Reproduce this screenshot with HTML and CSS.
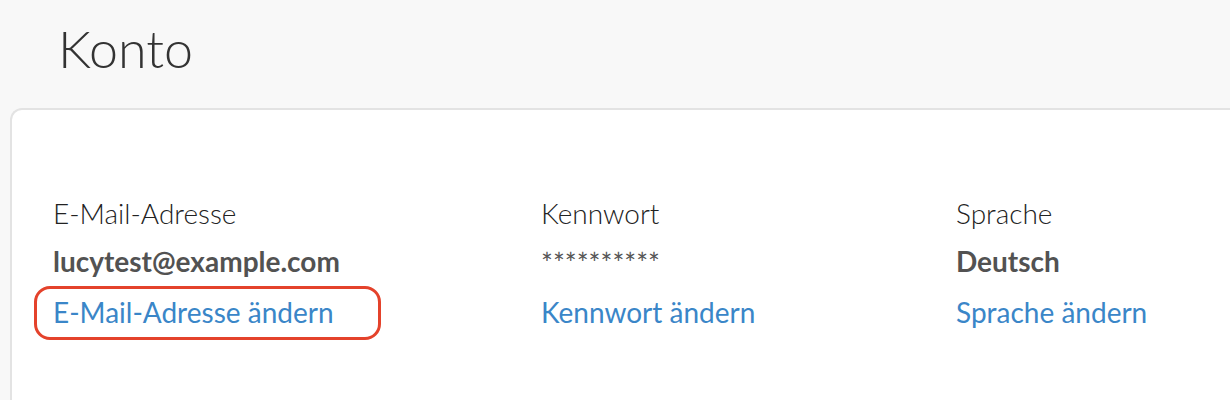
FILE: index.html
```html
<!DOCTYPE html>
<html lang="de">
<head>
<meta charset="utf-8">
<title>Konto</title>
<link rel="stylesheet" href="styles.css">
</head>
<body>
<header class="page-header">
  <h1 class="page-title">Konto</h1>
</header>
<section class="card">
  <div class="settings">
    <div class="setting">
      <div class="setting-label">E-Mail-Adresse</div>
      <div class="setting-value">lucytest@example.com</div>
      <a class="setting-link highlighted" href="#">E-Mail-Adresse ändern</a>
    </div>
    <div class="setting">
      <div class="setting-label">Kennwort</div>
      <div class="setting-value password">**********</div>
      <a class="setting-link" href="#">Kennwort ändern</a>
    </div>
    <div class="setting">
      <div class="setting-label">Sprache</div>
      <div class="setting-value">Deutsch</div>
      <a class="setting-link" href="#">Sprache ändern</a>
    </div>
  </div>
</section>
</body>
</html>
```

FILE: styles.css
```css
html, body {
  margin: 0;
  padding: 0;
  background: #f8f8f8;
  font-family: Lato, "Open Sans", sans-serif;
  overflow: hidden;
  height: 400px;
}

.page-header {
  padding: 17px 0 0 58px;
  height: 108px;
  box-sizing: border-box;
}

.page-title {
  margin: 0;
  font-size: 52px;
  font-weight: 300;
  line-height: 1.2;
  color: #333;
}

.card {
  margin-left: 10px;
  background: #fff;
  border: 2px solid #e3e3e3;
  border-right: none;
  border-bottom: none;
  border-radius: 12px 0 0 0;
  height: 292px;
  padding: 79px 0 0 41px;
  box-sizing: border-box;
}

.settings {
  display: grid;
  grid-template-columns: 488px 415px 1fr;
}

.setting {
  display: flex;
  flex-direction: column;
  align-items: flex-start;
}

.setting-label,
.setting-value,
.setting-link {
  font-size: 28px;
  line-height: 48px;
}

.setting-label {
  font-weight: 300;
  color: #222;
}

.setting-value {
  font-weight: 700;
  color: #525252;
}

.setting-value.password {
  font-weight: 400;
  color: #555;
  padding-top: 2px;
  margin-bottom: -2px;
}

.setting-link {
  margin-top: 3px;
  color: #3a86c8;
  text-decoration: none;
  position: relative;
}

.highlighted::after {
  content: "";
  position: absolute;
  left: -19px;
  right: -47px;
  top: -2px;
  bottom: -4px;
  border: 3.5px solid #e4422b;
  border-radius: 16px;
}
```
